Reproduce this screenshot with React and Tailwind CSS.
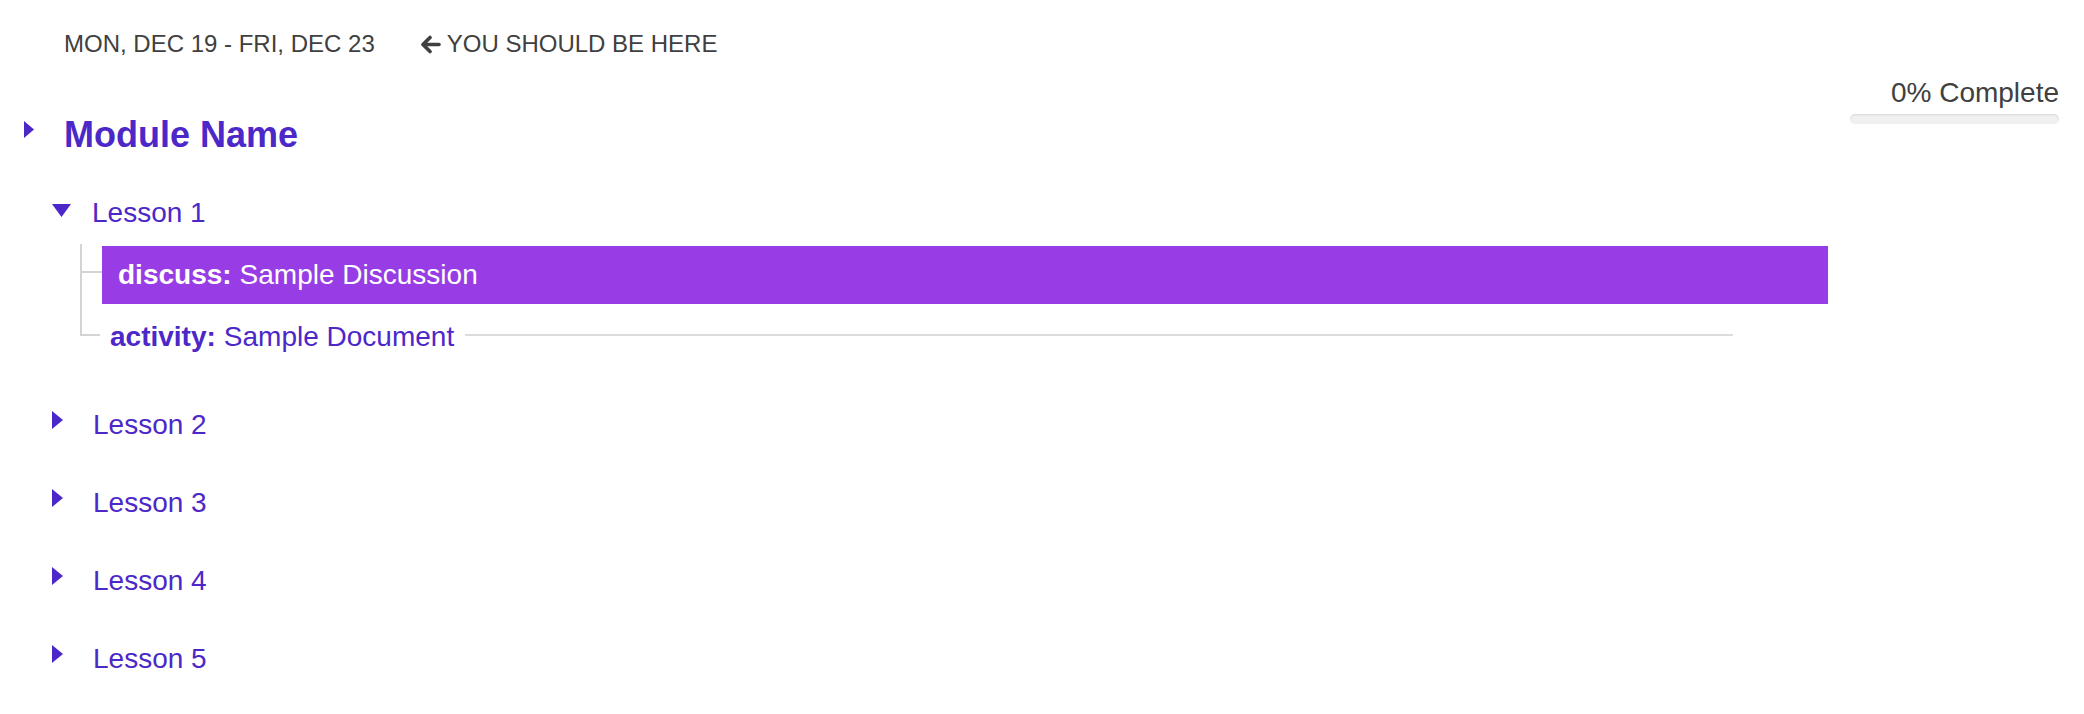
import React from "react";

const Right = ({ w, h, cls }) => (
  <svg width={w} height={h} viewBox={`0 0 ${w} ${h}`} className={cls}>
    <polygon points={`0,0 ${w},${h / 2} 0,${h}`} fill="#4c28c8" />
  </svg>
);

const Down = ({ w, h, cls }) => (
  <svg width={w} height={h} viewBox={`0 0 ${w} ${h}`} className={cls}>
    <polygon points={`0,0 ${w},0 ${w / 2},${h}`} fill="#4c28c8" />
  </svg>
);

const ArrowLeft = () => (
  <svg width="21" height="19" viewBox="0 0 21 19" className="mr-[6px]">
    <polyline points="10,2.5 3,9.5 10,16.5" fill="none" stroke="#404040" strokeWidth="3.6" strokeLinecap="round" strokeLinejoin="round" />
    <line x1="3.5" y1="9.5" x2="19" y2="9.5" stroke="#404040" strokeWidth="3.6" strokeLinecap="round" />
  </svg>
);

function Lesson({ n, first }) {
  return (
    <div className={`flex h-[44px] items-start pl-[52px] ${first ? "mt-[37px]" : "mt-[34px]"}`}>
      <div className="w-[41px] shrink-0">
        <Right w={11} h={18} cls="mt-[8px]" />
      </div>
      <span className="text-[28px] leading-[44px] text-[#4c28c8]">Lesson {n}</span>
    </div>
  );
}

export default function App() {
  return (
    <div
      className="w-[2084px] min-h-[714px] bg-white"
      style={{ fontFamily: '"Liberation Sans", Arial, sans-serif' }}
    >
      <div className="flex h-[58px] items-start pl-[64px] pt-[30px] text-[24px] leading-[28px] text-[#404040]">
        <span>MON, DEC 19 - FRI, DEC 23</span>
        <span className="ml-[45px] flex items-center">
          <ArrowLeft />
          YOU SHOULD BE HERE
        </span>
      </div>

      <div className="flex">
        <div className="flex-1 pt-[51px]">
          <div className="flex h-[52px] items-start pl-[24px]">
            <div className="w-[40px] shrink-0">
              <Right w={10} h={17} cls="mt-[12px]" />
            </div>
            <span className="text-[36px] font-bold leading-[52px] text-[#4c28c8]">Module Name</span>
          </div>

          <div className="mt-[30px] flex h-[44px] items-start pl-[52px]">
            <div className="w-[40px] shrink-0">
              <Down w={19} h={13} cls="mt-[13px]" />
            </div>
            <span className="text-[28px] leading-[44px] text-[#4c28c8]">Lesson 1</span>
          </div>

          <div className="mt-[9px] pl-[80px]">
            <div className="flex h-[60px]">
              <div className="flex w-[22px] shrink-0 flex-col">
                <div className="h-[29px] border-b-2 border-l-2 border-[#d4d4d4]" />
                <div className="flex-1 border-l-2 border-[#d4d4d4]" />
              </div>
              <div className="mt-[2px] flex h-[58px] flex-1 items-center bg-[#983de6] pl-[16px] text-[28px] text-white">
                <span className="font-bold">discuss:</span>
                <span className="ml-[8px]">Sample Discussion</span>
              </div>
            </div>
            <div className="flex h-[62px] pr-[95px]">
              <div className="h-[32px] w-[20px] shrink-0 border-b-2 border-l-2 border-[#d4d4d4]" />
              <div className="mt-[19px] flex h-[28px] flex-1 items-start">
                <span className="pl-[10px] pr-[11px] text-[28px] leading-[28px] text-[#4c28c8]">
                  <span className="font-bold">activity:</span>
                  <span className="ml-[8px]">Sample Document</span>
                </span>
                <div className="mt-[11px] h-[2px] flex-1 bg-[#dcdcdc]" />
              </div>
            </div>
          </div>

          <Lesson n={2} first />
          <Lesson n={3} />
          <Lesson n={4} />
          <Lesson n={5} />
        </div>

        <div className="ml-[22px] mr-[25px] w-[209px] shrink-0 pt-[19px]">
          <div className="text-right text-[28px] leading-[32px] text-[#404040]">0% Complete</div>
          <div className="mt-[5px] h-[10px] rounded-[5px] bg-[#f0f0f0] shadow-[inset_0_1px_2px_rgba(0,0,0,0.1)]" />
        </div>
      </div>
    </div>
  );
}
